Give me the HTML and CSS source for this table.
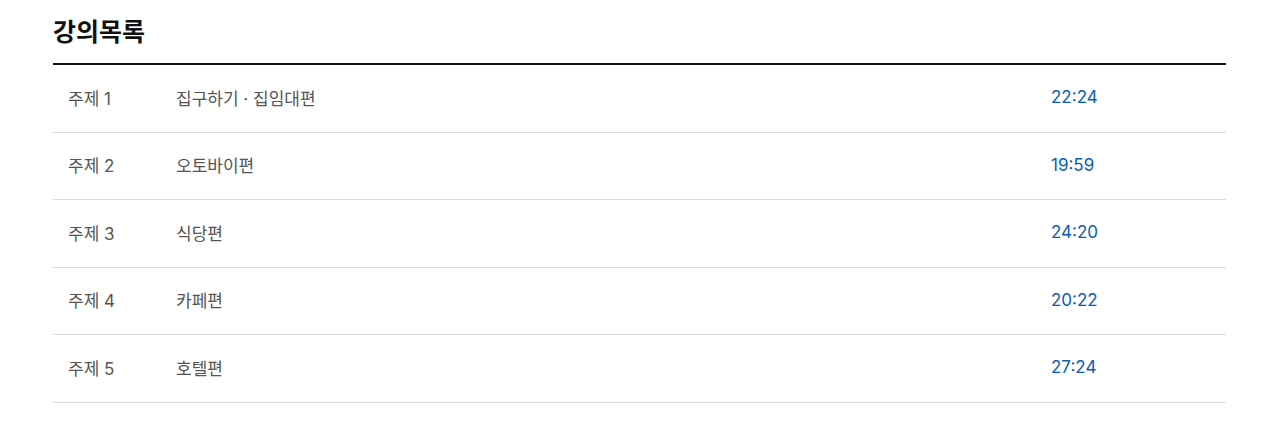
FILE: index.html
```html
<!DOCTYPE html>
<html lang="ko">
<head>
<meta charset="utf-8">
<link rel="stylesheet" href="styles.css">
</head>
<body>
<section class="lectures">
  <h2 class="title">강의목록</h2>
  <ul class="list">
    <li class="row"><span class="num">주제 1</span><span class="name">집구하기 · 집임대편</span><span class="time">22:24</span></li>
    <li class="row"><span class="num">주제 2</span><span class="name">오토바이편</span><span class="time">19:59</span></li>
    <li class="row"><span class="num">주제 3</span><span class="name">식당편</span><span class="time">24:20</span></li>
    <li class="row"><span class="num">주제 4</span><span class="name">카페편</span><span class="time">20:22</span></li>
    <li class="row"><span class="num">주제 5</span><span class="name">호텔편</span><span class="time">27:24</span></li>
  </ul>
</section>
</body>
</html>
```
FILE: styles.css
```css
html, body {
  margin: 0;
  padding: 0;
  background: #fff;
}
body {
  font-family: "Inter", "Noto Sans CJK KR", sans-serif;
}
.lectures {
  margin: 0 54px 0 53px;
}
.title {
  margin: 0;
  display: flex;
  align-items: center;
  font-size: 25px;
  font-weight: 700;
  color: #111;
  border-bottom: 2px solid #111;
  box-sizing: border-box;
  height: 65px;
  padding-bottom: 4px;
}
.list {
  list-style: none;
  margin: 0;
  padding: 0;
}
.row {
  display: grid;
  grid-template-columns: 123px 1fr 175px;
  align-items: center;
  height: 67.5px;
  box-sizing: border-box;
  border-bottom: 1px solid #dcdcdc;
  padding-bottom: 2px;
  font-size: 17px;
  color: #555;
}
.num {
  padding-left: 15px;
}
.time {
  color: #0a60b0;
}
```
